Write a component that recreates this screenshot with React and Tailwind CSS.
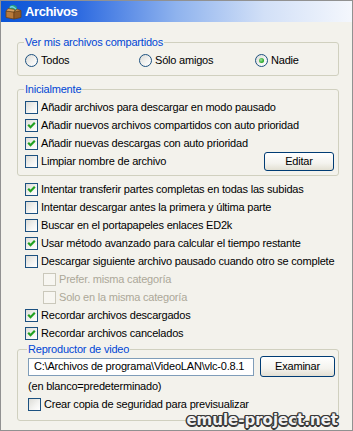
import clsx from 'clsx'

const Check = ({ checked, disabled }) => (
    <span
        className={clsx(
            'w-[13px] h-[13px] shrink-0 border flex items-center justify-center',
            disabled
                ? 'border-[#cac8bb] bg-[#f7f6f1]'
                : 'border-[#1c5180] bg-[linear-gradient(135deg,#dcdcd7_0%,#f4f4f2_60%,#ffffff_100%)]'
        )}
    >
        {checked && (
            <svg width="11" height="11" viewBox="0 0 11 11">
                <path d="M2.2 4.8 L4.5 7.2 L8.8 2.8" stroke="#21a121" strokeWidth="2.2" fill="none" />
            </svg>
        )}
    </span>
)

const Radio = ({ checked }) => (
    <span className="w-[13px] h-[13px] shrink-0 rounded-full border border-[#1c5180] bg-[linear-gradient(135deg,#dcdcd7_0%,#f4f4f2_60%,#ffffff_100%)] flex items-center justify-center">
        {checked && <span className="w-[5px] h-[5px] rounded-full bg-[radial-gradient(circle_at_40%_40%,#9be69b,#21a121_70%)]" />}
    </span>
)

const Row = ({ checked, disabled, children, className }) => (
    <div className={clsx('flex items-center gap-[3px] h-[18px]', className)}>
        <Check checked={checked} disabled={disabled} />
        <span className={clsx('whitespace-nowrap', disabled && 'text-[#aca899]')}>{children}</span>
    </div>
)

const Button = ({ children, className }) => (
    <button className={clsx('rounded-[3px] border border-[#003c74] bg-[linear-gradient(to_bottom,#ffffff_0%,#f4f3ee_60%,#e3e0d3_100%)] flex items-center justify-center shrink-0', className)}>
        {children}
    </button>
)

const Group = ({ title, children, className }) => (
    <fieldset className={clsx('border border-[#d0d0bf] rounded-[3px] min-w-0', className)}>
        <legend className="ml-[-1px] px-[1px] leading-[13px] text-[#0046d5]">{title}</legend>
        {children}
    </fieldset>
)

const BoxIcon = () => (
    <svg width="17" height="16" viewBox="0 0 17 16">
        <circle cx="8" cy="5" r="4" fill="#2aa37a" />
        <path d="M5 3.5 Q7 2 9 3.5 T11 5" stroke="#6fd0f0" strokeWidth="1.3" fill="none" />
        <path d="M1 7 L9 8 L9 15 L1 13.5 Z" fill="#b97a3a" stroke="#6b3f15" strokeWidth="0.8" />
        <path d="M9 8 L16 6.5 L16 13.5 L9 15 Z" fill="#8f5a26" stroke="#6b3f15" strokeWidth="0.8" />
        <path d="M1 7 L3 4.5 L10 5.5 L9 8 Z" fill="#d9a262" stroke="#6b3f15" strokeWidth="0.6" />
        <path d="M9 8 L12 5 L16 6.5 Z" fill="#c48a4a" stroke="#6b3f15" strokeWidth="0.6" />
    </svg>
)

export default function App() {
    return (
        <div className="relative w-[353px] h-[431px] overflow-hidden border border-[#919191] bg-[#f3f2ec] text-[11px] leading-[13px] tracking-[-0.2px] text-black font-['Tahoma','Liberation_Sans',sans-serif]">
            <div className="h-[21px] flex items-center gap-[3px] pl-[4px] bg-[linear-gradient(to_right,#0a54d6_0%,#2d6ae0_22%,#8fb3ee_50%,#d2e0f7_75%,#f4f7fd_100%)]">
                <BoxIcon />
                <span className="text-white font-bold text-[13px] tracking-[-0.4px] font-['Liberation_Sans',sans-serif]">Archivos</span>
            </div>

            <div className="pl-[16px] pr-[13px]">
                <Group title="Ver mis archivos compartidos" className="mt-[14px] px-[7px] pt-[5px] pb-[8px]">
                    <div className="flex items-center h-[13px]">
                        <div className="w-[114px] flex items-center gap-[3px]"><Radio />Todos</div>
                        <div className="w-[116px] flex items-center gap-[3px]"><Radio />Sólo amigos</div>
                        <div className="flex items-center gap-[3px]"><Radio checked />Nadie</div>
                    </div>
                </Group>

                <Group title="Inicialmente" className="mt-[7px] pl-[7px] pr-[4px] pt-[2px] pb-[5px]">
                    <Row>Añadir archivos para descargar en modo pausado</Row>
                    <Row checked>Añadir nuevos archivos compartidos con auto prioridad</Row>
                    <Row checked>Añadir nuevas descargas con auto prioridad</Row>
                    <div className="flex items-center justify-between h-[18px]">
                        <Row>Limpiar nombre de archivo</Row>
                        <Button className="w-[70px] h-[19px]">Editar</Button>
                    </div>
                </Group>

                <div className="mt-[4px] pl-[8px]">
                    <Row checked>Intentar transferir partes completas en todas las subidas</Row>
                    <Row>Intentar descargar antes la primera y última parte</Row>
                    <Row>Buscar en el portapapeles enlaces ED2k</Row>
                    <Row checked>Usar método avanzado para calcular el tiempo restante</Row>
                    <Row>Descargar siguiente archivo pausado cuando otro se complete</Row>
                    <Row disabled className="pl-[18px]">Prefer. misma categoría</Row>
                    <Row disabled className="pl-[18px]">Solo en la misma categoría</Row>
                    <Row checked>Recordar archivos descargados</Row>
                    <Row checked>Recordar archivos cancelados</Row>
                </div>

                <Group title="Reproductor de video" className="mt-[1px] pl-[10px] pr-[3px] pt-0 pb-[7px]">
                    <div className="flex items-center gap-[6px] h-[21px]">
                        <div className="w-[227px] h-[18px] border border-[#7f9db9] bg-white pl-[5px] flex items-center whitespace-nowrap overflow-hidden">
                            C:\Archivos de programa\VideoLAN\vlc-0.8.1
                        </div>
                        <Button className="w-[75px] h-[21px]">Examinar</Button>
                    </div>
                    <div className="mt-[3px] h-[13px]">(en blanco=predeterminado)</div>
                    <Row className="mt-[2px]">Crear copia de seguridad para previsualizar</Row>
                </Group>
            </div>

            <div className="absolute right-[14px] bottom-[1px] text-[15px] leading-[18px] tracking-normal font-bold text-[#f2f2f2] font-['DejaVu_Sans',sans-serif] [text-shadow:-1.5px_0_0_#3a3a3a,1.5px_0_0_#3a3a3a,0_-1.5px_0_#3a3a3a,0_1.5px_0_#3a3a3a,-1px_-1px_0_#3a3a3a,1px_-1px_0_#3a3a3a,-1px_1px_0_#3a3a3a,1px_1px_0_#3a3a3a]">
                emule-project.net
            </div>
        </div>
    )
}
